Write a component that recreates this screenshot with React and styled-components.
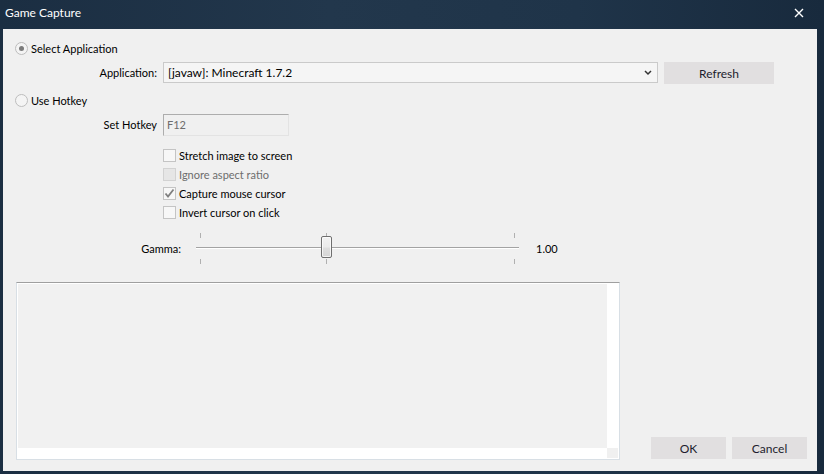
import React from "react";
import styled, { createGlobalStyle } from "styled-components";

const Global = createGlobalStyle`
  html, body { margin: 0; padding: 0; background: #1c2f43; }
  body { font-family: "Segoe UI", Lato, "Noto Sans", sans-serif; font-size: 11px; color: #000; }
  * { box-sizing: border-box; }
`;

const Frame = styled.div`
  width: 824px;
  height: 474px;
  display: flex;
  flex-direction: column;
  background: linear-gradient(90deg, #1b2e42 0%, #22374c 40%, #1f3449 70%, #182a3d 100%);
  overflow: hidden;
`;

const TitleBar = styled.div`
  height: 29px;
  flex: none;
  display: flex;
  align-items: center;
  justify-content: space-between;
  padding: 0 20px 4px 5px;
  color: #ffffff;
  font-size: 12px;
`;

const Client = styled.div`
  flex: 1;
  margin: 0 7px 3px 3px;
  background: #f0f0f0;
  display: flex;
  flex-direction: column;
  padding: 13px 0 0 12px;
`;

const RadioRow = styled.label`
  display: flex;
  align-items: center;
  gap: 3px;
  height: 13px;
  margin-top: ${p => p.$top || 0}px;
`;

const RadioCircle = styled.span`
  width: 13px;
  height: 13px;
  border-radius: 50%;
  border: 1px solid #bdbdbd;
  background: #f4f4f4;
  display: flex;
  align-items: center;
  justify-content: center;
  &::after {
    content: "";
    width: 5px;
    height: 5px;
    border-radius: 50%;
    background: ${p => (p.$checked ? "#7b7b7b" : "transparent")};
  }
`;

const FieldRow = styled.div`
  display: flex;
  align-items: flex-start;
  margin-top: ${p => p.$top || 0}px;
  height: 22px;
`;

const FieldLabel = styled.span`
  width: 142px;
  margin-right: 6px;
  text-align: right;
  line-height: ${p => p.$lh || 21}px;
`;

const Combo = styled.div`
  width: 495px;
  height: 21px;
  border: 1px solid #cacaca;
  background: #f5f5f5;
  display: flex;
  align-items: center;
  justify-content: space-between;
  padding: 0 5px 0 4px;
  font-size: 12px;
`;

const Button = styled.button`
  width: ${p => p.$w || 75}px;
  height: 22px;
  border: none;
  background: #e1dfe0;
  color: #1d1d2e;
  font-family: inherit;
  font-size: 12px;
  padding: 0;
  margin-left: ${p => p.$ml || 0}px;
`;

const TextInput = styled.div`
  width: 126px;
  height: 22px;
  border: 1px solid #adadad;
  border-color: #adadad #e3e3e3 #e3e3e3 #adadad;
  background: #f0f0f0;
  color: #6d6d6d;
  padding: 0 3px;
  line-height: 19px;
`;

const CheckList = styled.div`
  display: flex;
  flex-direction: column;
  gap: 6px;
  margin: 13px 0 0 148px;
`;

const CheckRow = styled.div`
  display: flex;
  align-items: center;
  height: 13px;
  gap: 3px;
  color: ${p => (p.$disabled ? "#6d6d6d" : "#000")};
`;

const Box = styled.span`
  width: 13px;
  height: 13px;
  border: 1px solid ${p => (p.$disabled ? "#d2d2d2" : "#c4c4c4")};
  background: ${p => (p.$disabled ? "#e6e6e6" : "#f7f7f7")};
  display: flex;
  align-items: center;
  justify-content: center;
`;

const GammaRow = styled.div`
  display: flex;
  align-items: center;
  height: 31px;
  margin-top: 14px;
`;

const GammaLabel = styled.span`
  width: 166px;
  text-align: right;
`;

const SliderSvg = styled.svg`
  display: block;
  margin-left: 15px;
  flex: none;
`;

const Value = styled.span`
  margin-left: 16px;
`;

const Bottom = styled.div`
  display: flex;
  align-items: flex-end;
  margin-top: 18px;
  padding-left: 1px;
`;

const Preview = styled.div`
  width: 604px;
  height: 178px;
  border: 1px solid #d8dfe5;
  border-top-color: #9f9f9f;
  background: #ffffff;
  padding: 1px;
  display: grid;
  grid-template-columns: 1fr 11px;
  grid-template-rows: 1fr 10px;
`;

const PreviewMain = styled.div`
  background: #f1f1f1;
`;

const Strip = styled.div`
  background: ${p => (p.$corner ? "#f0f0f0" : "#ffffff")};
`;

const Buttons = styled.div`
  display: flex;
  gap: 6px;
  margin-left: auto;
  margin-right: 10px;
  margin-bottom: 1px;
`;

function Slider() {
  const ticks = [4, 130, 318];
  return (
    <SliderSvg width="324" height="31" viewBox="0 0 324 31">
      <defs>
        <linearGradient id="thumb" x1="0" y1="0" x2="0" y2="1">
          <stop offset="0" stopColor="#f2f2f2" />
          <stop offset="0.5" stopColor="#ebebeb" />
          <stop offset="0.55" stopColor="#dedede" />
          <stop offset="1" stopColor="#d4d4d4" />
        </linearGradient>
      </defs>
      {ticks.map(x => (
        <g key={x}>
          <rect x={x} y="0" width="1" height="5" fill="#b0b0b0" />
          <rect x={x} y="26" width="1" height="5" fill="#b0b0b0" />
        </g>
      ))}
      <rect x="0" y="14" width="323" height="1" fill="#a3a3a3" />
      <rect x="0" y="15" width="323" height="1" fill="#ffffff" />
      <rect x="125.5" y="3.5" width="10" height="21" rx="1.5" fill="url(#thumb)" stroke="#6f6f6f" />
      <rect x="126.5" y="4.5" width="8" height="19" rx="1" fill="none" stroke="#ffffff" strokeOpacity="0.7" />
    </SliderSvg>
  );
}

function Check({ checked }) {
  return checked ? (
    <svg width="11" height="11" viewBox="0 0 11 11">
      <path d="M1.5 5.5 L4 8.5 L9.5 1.5" fill="none" stroke="#7f7f7f" strokeWidth="1.8" />
    </svg>
  ) : null;
}

export default function App() {
  return (
    <>
      <Global />
      <Frame>
        <TitleBar>
          <span>Game Capture</span>
          <svg width="10" height="10" viewBox="0 0 10 10">
            <path d="M1 1 L9 9 M9 1 L1 9" stroke="#ffffff" strokeWidth="1.4" />
          </svg>
        </TitleBar>
        <Client>
          <RadioRow>
            <RadioCircle $checked />
            <span>Select Application</span>
          </RadioRow>
          <FieldRow $top={7}>
            <FieldLabel>Application:</FieldLabel>
            <Combo>
              <span>[javaw]: Minecraft 1.7.2</span>
              <svg width="8" height="6" viewBox="0 0 8 6">
                <path d="M1 1 L4 4 L7 1" fill="none" stroke="#333" strokeWidth="1.5" />
              </svg>
            </Combo>
            <Button $w={110} $ml={6}>Refresh</Button>
          </FieldRow>
          <RadioRow $top={10}>
            <RadioCircle />
            <span>Use Hotkey</span>
          </RadioRow>
          <FieldRow $top={7}>
            <FieldLabel $lh={22}>Set Hotkey</FieldLabel>
            <TextInput>F12</TextInput>
          </FieldRow>
          <CheckList>
            <CheckRow><Box /><span>Stretch image to screen</span></CheckRow>
            <CheckRow $disabled><Box $disabled /><span>Ignore aspect ratio</span></CheckRow>
            <CheckRow><Box><Check checked /></Box><span>Capture mouse cursor</span></CheckRow>
            <CheckRow><Box /><span>Invert cursor on click</span></CheckRow>
          </CheckList>
          <GammaRow>
            <GammaLabel>Gamma:</GammaLabel>
            <Slider />
            <Value>1.00</Value>
          </GammaRow>
          <Bottom>
            <Preview>
              <PreviewMain />
              <Strip />
              <Strip />
              <Strip $corner />
            </Preview>
            <Buttons>
              <Button>OK</Button>
              <Button>Cancel</Button>
            </Buttons>
          </Bottom>
        </Client>
      </Frame>
    </>
  );
}
